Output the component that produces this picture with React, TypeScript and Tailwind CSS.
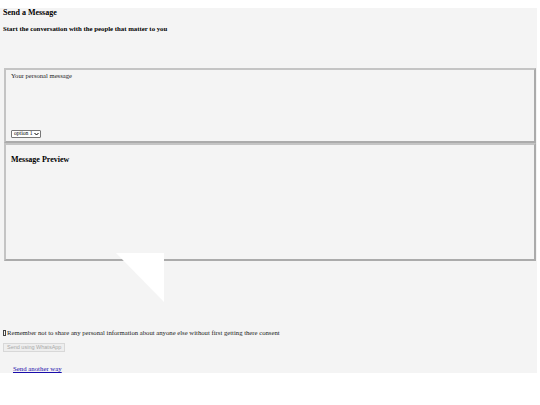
import React from "react";

export default function App() {
  return (
    <div className="w-[540px] h-[405px] bg-white" style={{ fontFamily: '"Liberation Serif", serif' }}>
      <div className="h-[8px]" />
      <div className="w-[537px] h-[365px] bg-[#f4f4f4] relative">
        <div className="pl-[3px] text-[8px] font-bold leading-[9px] text-black">Send a Message</div>
        <div className="pl-[3px] pt-[7px] text-[6.8px] font-bold leading-[9px] text-black">Start the conversation with the people that matter to you</div>
        <div className="h-[35px]" />
        <div className="ml-[4px] w-[532px] h-[75px] border-2 border-[#c4c4c4] border-r-[#ababab] border-b-[#ababab] flex flex-col px-[5px] pt-[1px] pb-[3px]">
          <div className="text-[6.6px] leading-[9px] text-[#222]">Your personal message</div>
          <div className="flex-1" />
          <div className="flex">
            <div className="h-[8px] border border-[#777] bg-white rounded-[1px] flex items-center pl-[2px] pr-[1px] gap-[1px] text-[5.6px] leading-none text-black" style={{ fontFamily: '"Liberation Serif", serif' }}>
              <span>option 1</span>
              <svg width="5" height="4" viewBox="0 0 5 4"><path d="M0.5 1 L2.5 3 L4.5 1" stroke="#000" strokeWidth="1" fill="none" /></svg>
            </div>
          </div>
        </div>
        <div className="ml-[4px] w-[532px] h-[118px] border-2 border-[#c4c4c4] border-r-[#ababab] border-b-[#ababab] px-[5px] pt-[9px]">
          <div className="text-[8px] font-bold leading-[11px] text-black">Message Preview</div>
        </div>
        <svg className="absolute left-[116px] top-[245px]" width="49" height="50" viewBox="0 0 49 50">
          <polygon points="0,0 48,0 48,49" fill="#ffffff" />
        </svg>
        <div className="h-[67px]" />
        <div className="pl-[3px] text-[6.7px] leading-[9px] text-[#222] flex items-center">
          <span className="inline-block w-[3px] h-[6px] border border-[#444] mr-[1px]" />
          <span>Remember not to share any personal information about anyone else without first getting there consent</span>
        </div>
        <div className="flex pl-[3px] pt-[6px]">
          <button disabled className="h-[9px] px-[3px] border border-[#d8d8d8] bg-[#eeeeee] text-[5.5px] leading-none text-[#aaa]" style={{ fontFamily: '"Liberation Sans", sans-serif' }}>Send using WhatsApp</button>
        </div>
        <div className="flex pl-[13px] pt-[12px] text-[6.8px] leading-[9px]">
          <a href="#" className="text-[#1a0dab] underline">Send another way</a>
        </div>
      </div>
    </div>
  );
}
